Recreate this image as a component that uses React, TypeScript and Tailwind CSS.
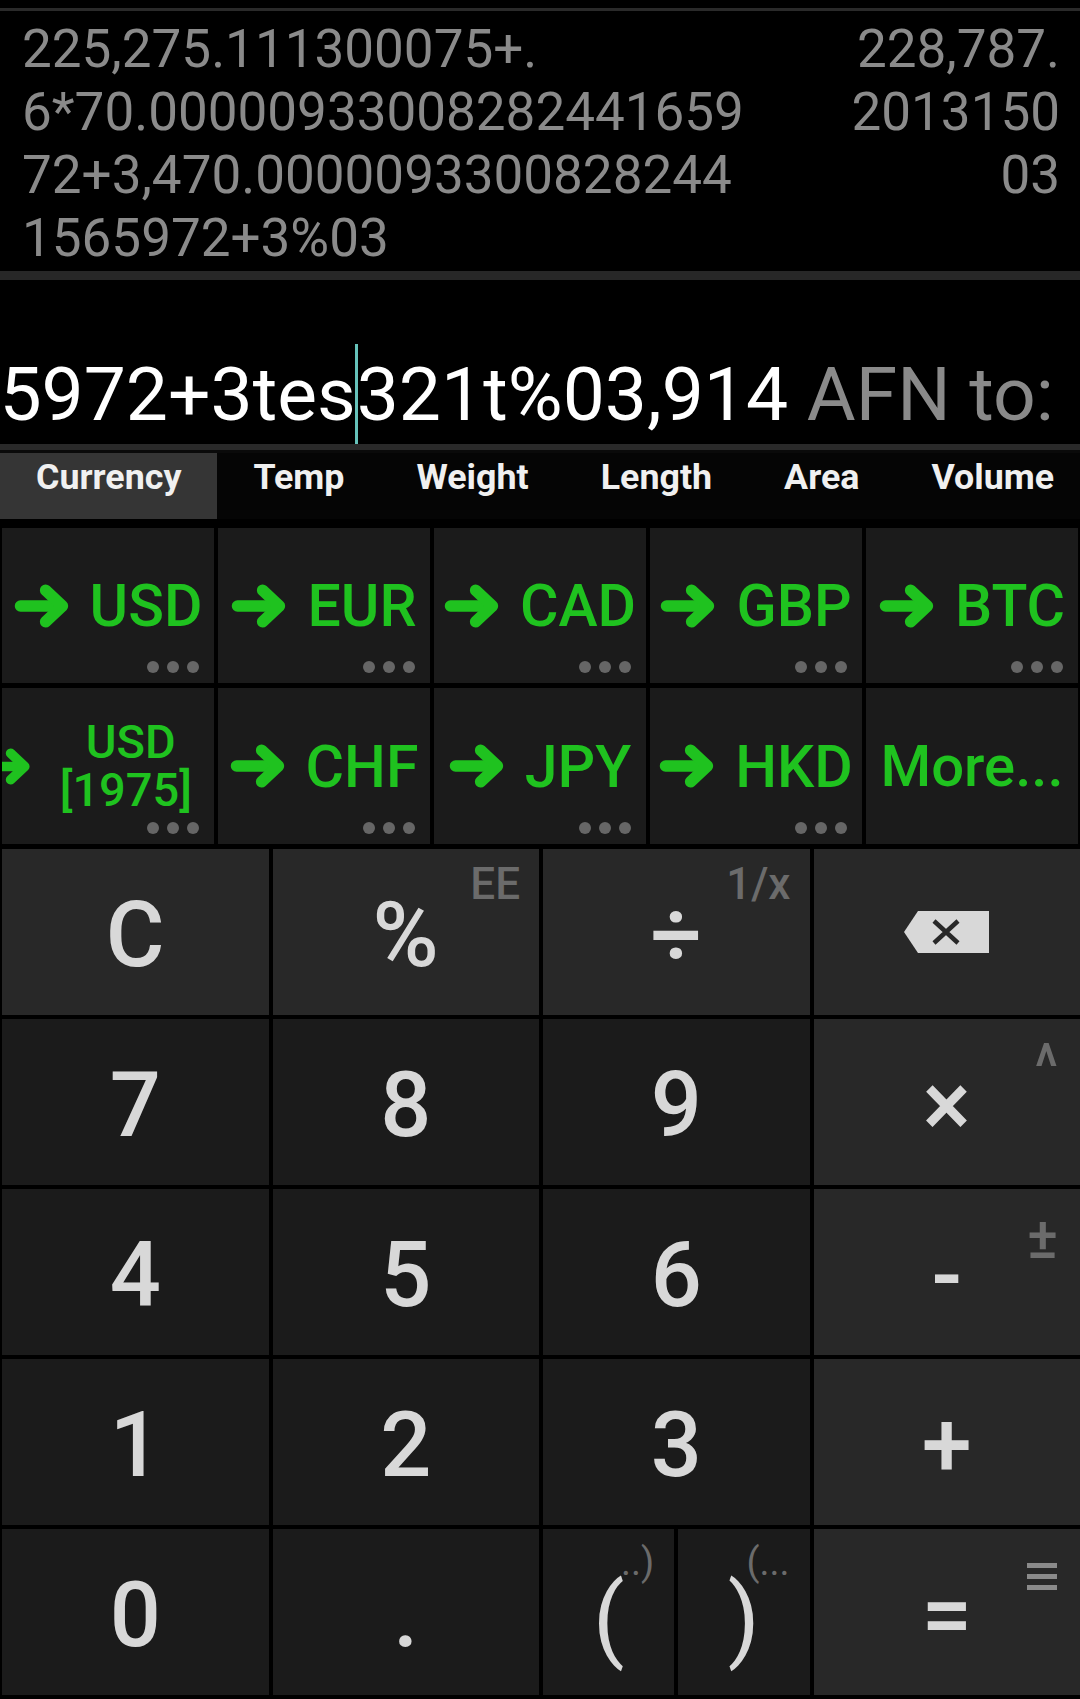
import clsx from 'clsx'

const TABS = ['Currency', 'Temp', 'Weight', 'Length', 'Area', 'Volume']

const HISTORY_LEFT = [
  '225,275.111300075+.',
  '6*70.00000933008282441659',
  '72+3,470.0000093300828244',
  '1565972+3%03',
]
const HISTORY_RIGHT = ['228,787.', '2013150', '03']

function Arrow({ small }: { small?: boolean }) {
  return (
    <svg
      viewBox="0 0 54 42"
      className={clsx('shrink-0', small ? 'w-[48px] h-[37px]' : 'w-[57px] h-[44px]')}
      fill="none"
      stroke="#1fc21f"
      strokeWidth="11"
      strokeLinecap="round"
      strokeLinejoin="round"
    >
      <path d="M6 21 H45" />
      <path d="M30 6 L46 21 L30 36" />
    </svg>
  )
}

function Dots() {
  return (
    <div className="absolute right-[15px] bottom-[10px] flex gap-[8px]">
      <div className="w-[12px] h-[12px] rounded-full bg-[#666666]" />
      <div className="w-[12px] h-[12px] rounded-full bg-[#666666]" />
      <div className="w-[12px] h-[12px] rounded-full bg-[#666666]" />
    </div>
  )
}

function CurrencyCell({ code }: { code: string }) {
  return (
    <div className="relative flex items-center justify-center gap-[19px] overflow-hidden bg-[#1b1b1b]">
      <Arrow />
      <span className="text-[59px] leading-none font-medium text-[#1fc21f]">{code}</span>
      <Dots />
    </div>
  )
}

function Key({
  label,
  sup,
  light,
  children,
}: {
  label?: string
  sup?: React.ReactNode
  light?: boolean
  children?: React.ReactNode
}) {
  return (
    <div
      className={clsx(
        'relative flex items-center justify-center overflow-hidden',
        light ? 'bg-[#282828]' : 'bg-[#1b1b1b]'
      )}
    >
      {sup}
      {children ?? (
        <span className="relative mt-[7px] text-[90px] leading-none font-medium text-[#d8d8d8]">
          {label}
        </span>
      )}
    </div>
  )
}

function Sup({ children, className }: { children: React.ReactNode; className?: string }) {
  return (
    <span
      className={clsx(
        'absolute leading-none font-medium text-[#6b6b6b]',
        className ?? 'top-[13px] right-[19px] text-[44px]'
      )}
    >
      {children}
    </span>
  )
}

function Backspace() {
  return (
    <svg viewBox="0 0 85 42" className="w-[85px] h-[42px]">
      <path d="M0 21 L14 0 H85 V42 H14 Z" fill="#d8d8d8" />
      <path d="M30 10 L54 32 M54 10 L30 32" stroke="#282828" strokeWidth="4.5" />
    </svg>
  )
}

export default function App() {
  return (
    <div className="w-[1080px] h-[1699px] overflow-hidden bg-black font-['Roboto',sans-serif] select-none">
      <div className="h-[8px]" />
      <div className="h-[3px] bg-[#2a2a2a]" />

      {/* history */}
      <div className="h-[260px] flex justify-between pl-[22px] pr-[20px] pt-[7px] text-[53px] leading-[63px] text-[#8a8a8a] whitespace-nowrap overflow-hidden">
        <div>
          {HISTORY_LEFT.map(l => (
            <div key={l}>{l}</div>
          ))}
        </div>
        <div className="text-right">
          {HISTORY_RIGHT.map(l => (
            <div key={l}>{l}</div>
          ))}
        </div>
      </div>
      <div className="h-[9px] bg-[#272727]" />

      {/* main display */}
      <div className="h-[164px] flex justify-end overflow-hidden pt-[64px] pr-[26px]">
        <div className="whitespace-nowrap text-[75px] leading-[100px] text-white">
          <span>5972+3tes</span>
          <span className="inline-block align-top w-[3px] h-[100px] -mx-[1px] bg-[#66c2ba]" />
          <span>321t%03,914</span>
          <span className="text-[#8a8a8a]"> AFN to:</span>
        </div>
      </div>
      <div className="h-[6px] bg-[#2a2a2a]" />
      <div className="h-[3px] bg-[#0a0a0a]" />

      {/* unit tabs */}
      <div className="h-[66px] flex bg-[#050505] overflow-hidden">
        {TABS.map((t, i) => (
          <div
            key={t}
            className={clsx(
              'shrink-0 flex items-center px-[36px] pb-[16px] text-[35.8px] font-bold text-[#f0f0f0]',
              i === 0 && 'bg-[#353535]'
            )}
          >
            {t}
          </div>
        ))}
      </div>
      <div className="h-[9px]" />

      {/* currency shortcuts */}
      <div className="h-[316px] grid grid-cols-5 grid-rows-[155px_156px] gap-x-[4px] gap-y-[5px] px-[2px]">
        <CurrencyCell code="USD" />
        <CurrencyCell code="EUR" />
        <CurrencyCell code="CAD" />
        <CurrencyCell code="GBP" />
        <CurrencyCell code="BTC" />
        <div className="relative flex items-center justify-end gap-[28px] pr-[22px] overflow-hidden bg-[#1b1b1b]">
          <Arrow small />
          <div className="shrink-0 text-center text-[47px] leading-[48px] font-medium text-[#1fc21f]">
            <div className="pl-[10px]">USD</div>
            <div>[1975]</div>
          </div>
          <Dots />
        </div>
        <CurrencyCell code="CHF" />
        <CurrencyCell code="JPY" />
        <CurrencyCell code="HKD" />
        <div className="flex items-center justify-center bg-[#1b1b1b]">
          <span className="text-[58px] leading-none font-medium text-[#1fc21f]">More...</span>
        </div>
      </div>
      <div className="h-[5px]" />

      {/* keypad */}
      <div className="h-[846px] grid grid-cols-4 grid-rows-5 gap-[4px] pl-[2px]">
        <Key label="C" light />
        <Key label="%" light sup={<Sup>EE</Sup>} />
        <Key label="÷" light sup={<Sup>1/x</Sup>} />
        <Key light>
          <Backspace />
        </Key>

        <Key label="7" />
        <Key label="8" />
        <Key label="9" />
        <Key
          label="×"
          light
          sup={
            <Sup className="top-[21px] right-[22px] text-[54px] font-bold">
              <span className="inline-block scale-y-[1.2]">^</span>
            </Sup>
          }
        />

        <Key label="4" />
        <Key label="5" />
        <Key label="6" />
        <Key label="-" light sup={<Sup className="top-[20px] right-[22px] text-[58px]">±</Sup>} />

        <Key label="1" />
        <Key label="2" />
        <Key label="3" />
        <Key label="+" light />

        <Key label="0" />
        <Key label="." />
        <div className="grid grid-cols-2 gap-[4px]">
          <Key sup={<Sup className="top-[14px] right-[20px] text-[38px] font-normal">..)</Sup>}>
            <span className="relative mt-[14px] text-[92px] leading-none font-normal text-[#d8d8d8]">(</span>
          </Key>
          <Key sup={<Sup className="top-[14px] right-[20px] text-[38px] font-normal">(...</Sup>}>
            <span className="relative mt-[14px] text-[92px] leading-none font-normal text-[#d8d8d8]">)</span>
          </Key>
        </div>
        <Key
          label="="
          light
          sup={
            <div className="absolute top-[34px] right-[23px] flex flex-col gap-[6px]">
              <div className="w-[30px] h-[5px] bg-[#8a8a8a]" />
              <div className="w-[30px] h-[5px] bg-[#8a8a8a]" />
              <div className="w-[30px] h-[5px] bg-[#8a8a8a]" />
            </div>
          }
        />
      </div>
    </div>
  )
}
